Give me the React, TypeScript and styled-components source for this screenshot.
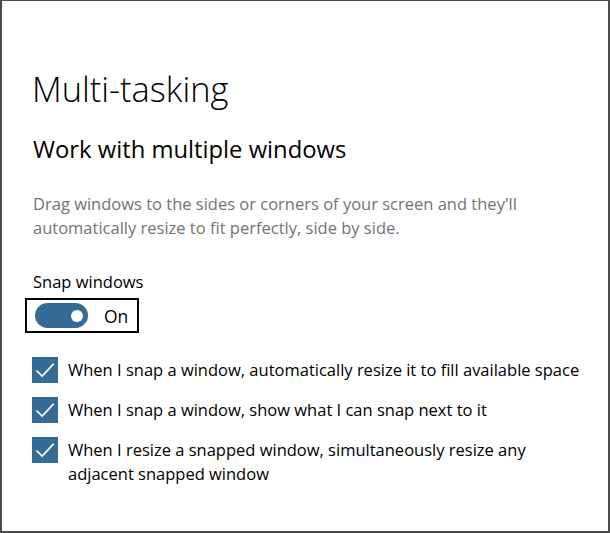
import styled, { createGlobalStyle } from 'styled-components'

const GlobalStyle = createGlobalStyle`
  html, body {
    margin: 0;
    padding: 0;
    background: #ffffff;
  }
  * {
    box-sizing: border-box;
  }
`

const accent = '#356b97'

const options = [
  'When I snap a window, automatically resize it to fill available space',
  'When I snap a window, show what I can snap next to it',
  'When I resize a snapped window, simultaneously resize any adjacent snapped window',
]

const App = () => {
  return (
    <>
      <GlobalStyle />
      <Window>
        <Title>Multi-tasking</Title>
        <Subtitle>Work with multiple windows</Subtitle>
        <Description>
          Drag windows to the sides or corners of your screen and they'll
          automatically resize to fit perfectly, side by side.
        </Description>
        <Label>Snap windows</Label>
        <ToggleFocus>
          <Track>
            <Knob />
          </Track>
          <ToggleText>On</ToggleText>
        </ToggleFocus>
        <OptionList>
          {options.map(text => (
            <Option key={text}>
              <CheckBox>
                <svg width="26" height="26" viewBox="0 0 26 26">
                  <path
                    d="M4.5 13.6 L10.2 19 L21.8 6.6"
                    fill="none"
                    stroke="#ffffff"
                    strokeWidth="1.6"
                  />
                </svg>
              </CheckBox>
              <OptionText>{text}</OptionText>
            </Option>
          ))}
        </OptionList>
      </Window>
    </>
  )
}

export default App

const Window = styled.div`
  width: 610px;
  height: 533px;
  border-style: solid;
  border-color: #4b4b4b;
  border-width: 1px 2px 2px 2px;
  background: #ffffff;
  padding: 66px 20px 0 31px;
  font-family: 'Open Sans', 'Noto Sans', sans-serif;
  color: #000000;
  overflow: hidden;
`

const Title = styled.h1`
  margin: 0 0 0 -1px;
  font-size: 34.4px;
  line-height: 44px;
  font-weight: 300;
`

const Subtitle = styled.h2`
  margin: 22px 0 0;
  font-size: 23.8px;
  line-height: 32px;
  font-weight: 400;
`

const Description = styled.p`
  margin: 27px 0 0;
  width: 520px;
  font-size: 16.5px;
  line-height: 24px;
  color: #737373;
`

const Label = styled.div`
  margin-top: 30px;
  font-size: 16.5px;
  line-height: 24px;
`

const ToggleFocus = styled.div`
  display: inline-flex;
  align-items: center;
  gap: 16px;
  margin: 4px 0 0 -8px;
  height: 35px;
  padding: 0 9px 0 8px;
  border: 2px solid #000000;
`

const Track = styled.div`
  position: relative;
  width: 53px;
  height: 25px;
  border-radius: 13px;
  background: ${accent};
`

const Knob = styled.span`
  position: absolute;
  top: 6.5px;
  right: 5px;
  width: 12px;
  height: 12px;
  border-radius: 50%;
  background: #ffffff;
`

const ToggleText = styled.span`
  font-size: 17.5px;
  line-height: 24px;
`

const OptionList = styled.div`
  display: flex;
  flex-direction: column;
  gap: 14px;
  margin-top: 24px;
`

const Option = styled.div`
  display: flex;
  align-items: flex-start;
  gap: 10px;
  margin-left: -1px;
`

const CheckBox = styled.span`
  display: flex;
  flex: none;
  width: 26px;
  height: 26px;
  background: ${accent};
`

const OptionText = styled.span`
  font-size: 16.5px;
  line-height: 23.5px;
  padding-top: 1px;
  max-width: 520px;
`
